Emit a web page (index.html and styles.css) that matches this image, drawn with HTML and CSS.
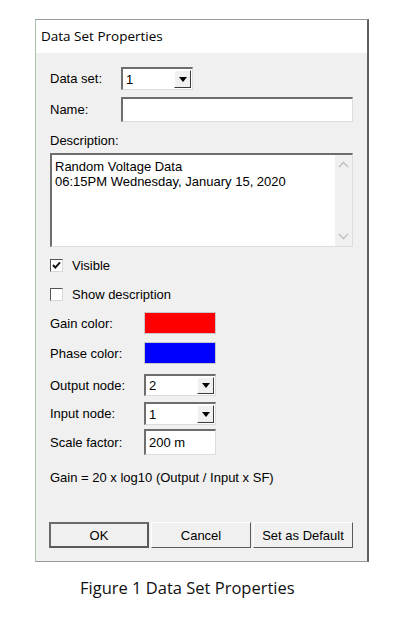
FILE: index.html
```html
<!DOCTYPE html>
<html>
<head>
<meta charset="utf-8">
<link rel="stylesheet" href="styles.css">
</head>
<body>
<div class="page">
  <div class="dialog">
    <div class="titlebar">Data Set Properties</div>
    <div class="content">
      <div class="row r-dataset">
        <span class="label lw1">Data set:</span>
        <div class="field combo w72 h23"><span class="val">1</span><span class="dd"><span class="tri"></span></span></div>
      </div>
      <div class="row r-name">
        <span class="label lw1">Name:</span>
        <div class="field w232 h25"></div>
      </div>
      <div class="row r-desclabel"><span class="label">Description:</span></div>
      <div class="field textarea">
        <div class="tatext">Random Voltage Data<br>06:15PM Wednesday, January 15, 2020</div>
        <div class="vscroll">
          <svg width="11" height="7" viewBox="0 0 11 7"><path d="M1 6 L5.5 1.5 L10 6" fill="none" stroke="#c4c4c4" stroke-width="1.6"/></svg>
          <svg width="11" height="7" viewBox="0 0 11 7"><path d="M1 1 L5.5 5.5 L10 1" fill="none" stroke="#c4c4c4" stroke-width="1.6"/></svg>
        </div>
      </div>
      <div class="row r-visible">
        <span class="check"><svg width="11" height="11" viewBox="0 0 11 11"><path d="M2 5 L4.3 7.6 L9 2.4" fill="none" stroke="#111" stroke-width="2"/></svg></span>
        <span class="clabel">Visible</span>
      </div>
      <div class="row r-show">
        <span class="check"></span>
        <span class="clabel">Show description</span>
      </div>
      <div class="row r-gain">
        <span class="label lw2">Gain color:</span>
        <span class="swatch red"></span>
      </div>
      <div class="row r-phase">
        <span class="label lw2">Phase color:</span>
        <span class="swatch blue"></span>
      </div>
      <div class="row r-output">
        <span class="label lw2">Output node:</span>
        <div class="field combo w72 h22"><span class="val">2</span><span class="dd"><span class="tri"></span></span></div>
      </div>
      <div class="row r-input">
        <span class="label lw2">Input node:</span>
        <div class="field combo w72 h23"><span class="val">1</span><span class="dd"><span class="tri"></span></span></div>
      </div>
      <div class="row r-scale">
        <span class="label lw2">Scale factor:</span>
        <div class="field w72 h26"><span class="val">200 m</span></div>
      </div>
      <div class="row r-formula"><span class="label">Gain = 20 x log10 (Output / Input x SF)</span></div>
      <div class="buttons">
        <div class="btn default">OK</div>
        <div class="btn">Cancel</div>
        <div class="btn">Set as Default</div>
      </div>
    </div>
  </div>
  <div class="caption">Figure 1 Data Set Properties</div>
</div>
</body>
</html>
```

FILE: styles.css
```css
html, body {
  margin: 0;
  padding: 0;
  background: #ffffff;
}
.page {
  width: 400px;
  height: 630px;
  padding-top: 19px;
  box-sizing: border-box;
}
.dialog {
  margin-left: 35px;
  width: 334px;
  height: 543px;
  box-sizing: border-box;
  border: 1px solid #9a9a9a;
  border-left-color: #a8c4a8;
  border-right: 2px solid #606060;
  display: flex;
  flex-direction: column;
  font-family: "Liberation Sans", Arial, sans-serif;
  font-size: 13px;
  color: #000;
}
.titlebar {
  height: 33px;
  background: #ffffff;
  font-family: "Open Sans", "Liberation Sans", sans-serif;
  font-size: 13.5px;
  line-height: 33px;
  padding-left: 5px;
  color: #000;
}
.content {
  flex: 1;
  background: #f0f0f0;
  padding: 14px 0 13px 14px;
  display: flex;
  flex-direction: column;
}
.row {
  display: flex;
  align-items: center;
}
.label {
  white-space: nowrap;
}
.lw1 { width: 71px; flex: none; }
.lw2 { width: 94px; flex: none; }
.w72 { width: 72px; }
.w232 { width: 232px; }
.h22 { height: 22px; }
.h23 { height: 23px; }
.h25 { height: 25px; }
.h26 { height: 26px; }
.field {
  box-sizing: border-box;
  background: #ffffff;
  border-style: solid;
  border-width: 2px 1px 1px 2px;
  border-color: #6e6e6e #dcdcdc #dcdcdc #6e6e6e;
  display: flex;
  align-items: center;
  position: relative;
}
.val {
  padding-left: 3px;
  flex: 1;
}
.combo .dd {
  width: 17px;
  align-self: stretch;
  margin: 1px 1px 1px 0;
  background: #f0f0f0;
  border-right: 1px solid #3c3c3c;
  border-bottom: 1px solid #3c3c3c;
  border-top: 1px solid #fff;
  border-left: 1px solid #fff;
  display: flex;
  align-items: center;
  justify-content: center;
  box-sizing: border-box;
}
.tri {
  width: 0;
  height: 0;
  border-left: 4px solid transparent;
  border-right: 4px solid transparent;
  border-top: 5px solid #000;
}
.r-dataset { height: 23px; }
.r-name { height: 25px; margin-top: 7px; }
.r-desclabel { height: 14px; margin-top: 11px; }
.textarea {
  width: 303px;
  height: 94px;
  margin-top: 6px;
  align-items: stretch;
}
.tatext {
  flex: 1;
  padding: 4px 0 0 3px;
  line-height: 15px;
}
.vscroll {
  width: 17px;
  background: #f0f0f0;
  display: flex;
  flex-direction: column;
  justify-content: space-between;
  align-items: center;
  padding: 6px 0 6px;
  box-sizing: border-box;
}
.r-visible { height: 15px; margin-top: 11px; }
.r-show { height: 15px; margin-top: 14px; }
.check {
  width: 13px;
  height: 13px;
  box-sizing: border-box;
  background: #fff;
  border: 1px solid #555;
  border-right-color: #d8d8d8;
  border-bottom-color: #d8d8d8;
  display: flex;
  align-items: center;
  justify-content: center;
}
.clabel { margin-left: 9px; }
.r-gain { height: 22px; margin-top: 10px; }
.r-phase { height: 22px; margin-top: 8px; }
.swatch {
  width: 72px;
  height: 22px;
  box-sizing: border-box;
  border: 1px solid #c8c8c8;
}
.red { background: #ff0000; }
.blue { background: #0000ff; }
.r-output { height: 22px; margin-top: 10px; }
.r-input { height: 23px; margin-top: 6px; }
.r-scale { height: 26px; margin-top: 4px; }
.r-formula { height: 15px; margin-top: 15px; }
.buttons {
  margin-top: auto;
  margin-left: -1px;
  display: flex;
  gap: 2px;
}
.btn {
  width: 100px;
  height: 26px;
  box-sizing: border-box;
  background: #f0f0f0;
  border: 1px solid #a0a0a0;
  border-right-color: #5a5a5a;
  border-bottom-color: #5a5a5a;
  border-top-color: #ffffff;
  border-left-color: #ffffff;
  display: flex;
  align-items: center;
  justify-content: center;
  white-space: nowrap;
}
.btn.default {
  border: 2px solid #5a5a5a;
  border-top-color: #6a6a6a;
  border-left-color: #6a6a6a;
}
.caption {
  margin-top: 15px;
  padding-left: 80px;
  font-family: "Open Sans", "Liberation Sans", sans-serif;
  font-size: 16.5px;
  line-height: 22px;
  color: #111;
}
```
